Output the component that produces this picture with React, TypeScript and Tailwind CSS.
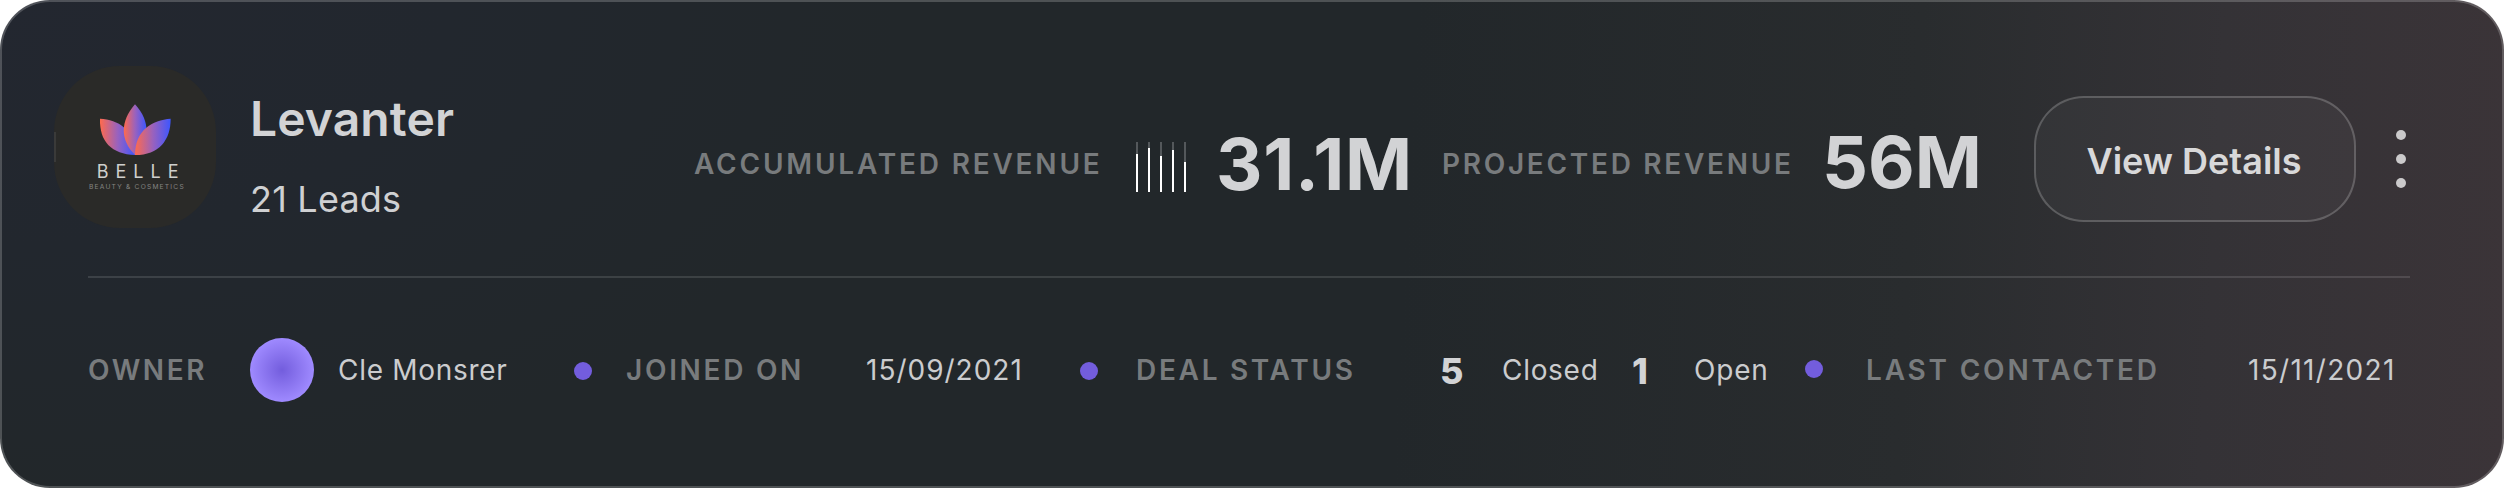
import type { ReactNode } from "react";

function Label({ className, children }: { className: string; children: ReactNode }) {
  return (
    <span className={`block shrink-0 whitespace-nowrap text-[28px] leading-[34px] font-semibold text-[#787b7d] ${className}`}>
      {children}
    </span>
  );
}

function Value({ className, children }: { className: string; children: ReactNode }) {
  return (
    <span className={`block shrink-0 whitespace-nowrap text-[28px] leading-[34px] text-[#cbccce] ${className}`}>
      {children}
    </span>
  );
}

function Dot({ className }: { className: string }) {
  return <span className={`block size-[18px] shrink-0 rounded-full bg-[#735ddd] ${className}`} />;
}

function Logo() {
  return (
    <div className="relative size-[162px] shrink-0 overflow-hidden rounded-[66px] bg-[#2a2a28]">
      <span className="absolute top-[66px] left-0 h-[30px] w-0.5 bg-[#3a3a39]" />
      <svg viewBox="42 48 486 486" className="size-full">
        <defs>
          <linearGradient id="petal" x1="0" y1="0" x2="1" y2="0">
            <stop offset="0" stopColor="#ff6a4d" />
            <stop offset="0.5" stopColor="#9a62bd" />
            <stop offset="1" stopColor="#3d56ff" />
          </linearGradient>
        </defs>
        <path d="M180 206 C235 210 282 235 285 315 C215 312 178 275 180 206Z" fill="url(#petal)" />
        <path d="M285 163 C332 215 330 270 285 315 C240 270 240 215 285 163Z" fill="url(#petal)" />
        <path d="M392 206 C337 210 285 240 285 315 C357 315 392 270 392 206Z" fill="url(#petal)" />
        <text x="170" y="384" fontSize="54" textLength="246" className="fill-[#cfcfcd] font-['Inter',sans-serif]">
          BELLE
        </text>
        <text x="147" y="418" fontSize="20" textLength="284" className="fill-[#858583] font-['Inter',sans-serif]">
          BEAUTY &amp; COSMETICS
        </text>
      </svg>
    </div>
  );
}

function Bar({ fill }: { fill: string }) {
  return (
    <span className="flex h-[50px] w-0.5 items-end bg-[#54585b]">
      <span className={`block w-full bg-white ${fill}`} />
    </span>
  );
}

export default function App() {
  return (
    <div className="h-[488px] w-[2504px] bg-white font-['Inter',sans-serif]">
      <div className="flex h-full w-full flex-col rounded-[50px] border-2 border-white/20 bg-[radial-gradient(ellipse_900px_500px_at_0_0,#232730_0%,#22272e_50%,#22272a00_100%),linear-gradient(93deg,#22272a_0%,#22272a_56%,#292c2e_76%,#343236_88%,#3b3438_100%)] bg-origin-border">
        <div className="flex h-[274px] shrink-0 items-start pl-[52px]">
          <div className="mt-[64px] shrink-0">
            <Logo />
          </div>
          <div className="mt-[87px] ml-[34px] w-[442px] shrink-0 whitespace-nowrap">
            <div className="text-[48px] leading-[60px] font-semibold tracking-[0.1px] text-[#d2d3d5]">Levanter</div>
            <div className="mt-[28px] text-[36px] leading-[44px] tracking-[0.2px] text-[#cfd0d2]">21 Leads</div>
          </div>
          <Label className="mt-[145px] ml-[2px] w-[442px] tracking-[2.8px]">ACCUMULATED REVENUE</Label>
          <div className="mt-[140px] flex w-[80px] shrink-0 gap-[10px]">
            <Bar fill="h-[38px]" />
            <Bar fill="h-[44px]" />
            <Bar fill="h-[36px]" />
            <Bar fill="h-[42px]" />
            <Bar fill="h-[30px]" />
          </div>
          <div className="mt-[118px] w-[226px] shrink-0 text-[72px] leading-[88px] font-bold tracking-[0.7px] whitespace-nowrap text-[#d2d3d5]">31.1M</div>
          <Label className="mt-[145px] w-[380px] tracking-[2.7px]">PROJECTED REVENUE</Label>
          <div className="mt-[116px] w-[212px] shrink-0 text-[72px] leading-[88px] font-bold whitespace-nowrap text-[#d2d3d5]">56M</div>
          <button className="mt-[94px] h-[126px] w-[322px] shrink-0 rounded-[50px] border-2 border-white/20 bg-white/3 pt-[3px] pr-[2px] text-[36px] leading-[44px] font-semibold whitespace-nowrap text-[#d8d8d9]">
            View Details
          </button>
          <div className="mt-[128px] ml-[40px] flex shrink-0 flex-col gap-[14px]">
            <span className="size-[10px] rounded-full bg-[#cbcacb]" />
            <span className="size-[10px] rounded-full bg-[#cbcacb]" />
            <span className="size-[10px] rounded-full bg-[#cbcacb]" />
          </div>
        </div>
        <div className="ml-[86px] h-0.5 w-[2322px] shrink-0 bg-white/12" />
        <div className="flex items-start pl-[86px]">
          <Label className="mt-[75px] w-[162px] tracking-[2.6px]">OWNER</Label>
          <span className="mt-[60px] mr-[24px] block size-[64px] shrink-0 rounded-full bg-[radial-gradient(circle_closest-side,#735ddd_0%,#9f8aff_100%)]" />
          <Value className="mt-[75px] w-[236px] tracking-[0.7px]">Cle Monsrer</Value>
          <Dot className="mt-[84px] mr-[34px]" />
          <Label className="mt-[75px] w-[240px] tracking-[2.7px]">JOINED ON</Label>
          <Value className="mt-[75px] w-[214px] tracking-[1px]">15/09/2021</Value>
          <Dot className="mt-[84px] mr-[38px]" />
          <Label className="mt-[75px] w-[304px] tracking-[2.7px]">DEAL STATUS</Label>
          <span className="mt-[71px] block w-[62px] shrink-0 text-[36px] leading-[44px] font-extrabold text-[#d2d3d5]">5</span>
          <Value className="mt-[75px] w-[130px] tracking-[0.7px]">Closed</Value>
          <span className="mt-[71px] block w-[62px] shrink-0 text-[36px] leading-[44px] font-extrabold text-[#d2d3d5]">1</span>
          <Value className="mt-[75px] w-[111px] tracking-[0.8px]">Open</Value>
          <Dot className="mt-[82px] mr-[43px]" />
          <Label className="mt-[75px] w-[382px] tracking-[2.8px]">LAST CONTACTED</Label>
          <Value className="mt-[75px] tracking-[1.3px]">15/11/2021</Value>
        </div>
      </div>
    </div>
  );
}
